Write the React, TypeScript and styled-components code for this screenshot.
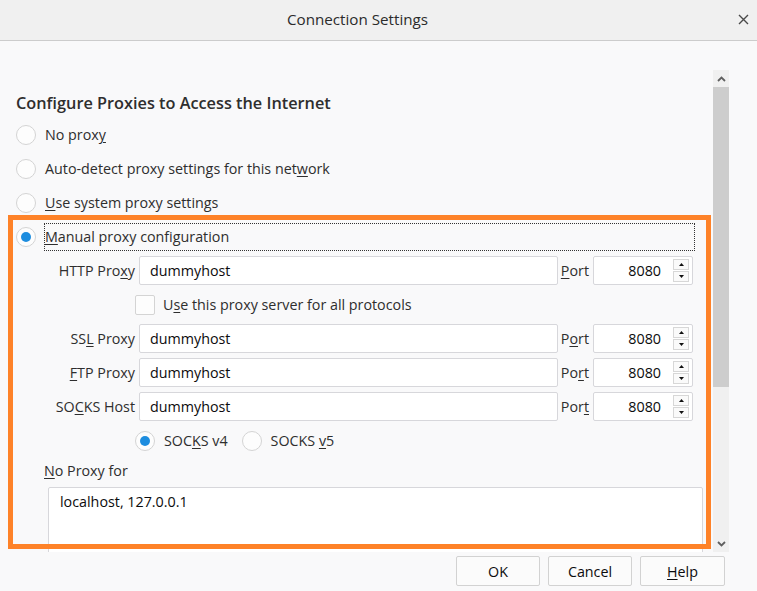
import styled, { createGlobalStyle } from 'styled-components'

const GlobalStyle = createGlobalStyle`
  html, body {
    margin: 0;
    padding: 0;
    background: #f9f9fa;
  }
  body {
    font-family: 'Open Sans', 'Noto Sans', sans-serif;
    color: #2e2e2e;
  }
`

const proxies = [
  { label: <>HTTP Pro<u>x</u>y</>, port: <><u>P</u>ort</> },
  { label: <>SS<u>L</u> Proxy</>, port: <>P<u>o</u>rt</> },
  { label: <><u>F</u>TP Proxy</>, port: <>Po<u>r</u>t</> },
  { label: <>SO<u>C</u>KS Host</>, port: <>Por<u>t</u></> },
]

const ProxyRow = ({ label, port }: { label: React.ReactNode; port: React.ReactNode }) => (
  <>
    <FieldLabel>{label}</FieldLabel>
    <TextInput defaultValue="dummyhost" />
    <FieldLabel>{port}</FieldLabel>
    <PortBox>
      <PortValue>8080</PortValue>
      <Spinner>
        <SpinButton>
          <svg width="5" height="3" viewBox="0 0 5 3">
            <path d="M2.5 0 L5 3 L0 3 Z" fill="#111" />
          </svg>
        </SpinButton>
        <SpinButton>
          <svg width="5" height="3" viewBox="0 0 5 3">
            <path d="M0 0 L5 0 L2.5 3 Z" fill="#111" />
          </svg>
        </SpinButton>
      </Spinner>
    </PortBox>
  </>
)

const Chevron = ({ up }: { up?: boolean }) => (
  <svg width="9" height="6" viewBox="0 0 9 6">
    <polyline
      points={up ? '1,5 4.5,1.5 8,5' : '1,1 4.5,4.5 8,1'}
      fill="none"
      stroke="#5f5f5f"
      strokeWidth="1.8"
    />
  </svg>
)

export default function App() {
  return (
    <>
      <GlobalStyle />
      <Dialog>
        <TitleBar>
          <Title>Connection Settings</Title>
          <CloseButton>
            <svg width="11" height="11" viewBox="0 0 11 11">
              <path d="M1 1 L10 10 M10 1 L1 10" stroke="#4a4a4a" strokeWidth="1.4" />
            </svg>
          </CloseButton>
        </TitleBar>

        <ScrollArea>
          <Content>
            <Heading>Configure Proxies to Access the Internet</Heading>
            <RadioRow>
              <Radio />
              <OptionText>No prox<u>y</u></OptionText>
            </RadioRow>
            <RadioRow>
              <Radio />
              <OptionText>Auto-detect proxy settings for this net<u>w</u>ork</OptionText>
            </RadioRow>
            <RadioRow>
              <Radio />
              <OptionText><u>U</u>se system proxy settings</OptionText>
            </RadioRow>
            <RadioRow>
              <Radio $checked />
              <FocusText><u>M</u>anual proxy configuration</FocusText>
            </RadioRow>

            <ProxyGrid>
              <ProxyRow {...proxies[0]} />
              <SubOptions>
                <Checkbox />
                <OptionText>U<u>s</u>e this proxy server for all protocols</OptionText>
              </SubOptions>
              {proxies.slice(1).map((p, i) => (
                <ProxyRow key={i} {...p} />
              ))}
              <SubOptions>
                <Radio $checked />
                <SocksText>SOC<u>K</u>S v4</SocksText>
                <Radio />
                <SocksText>SOCKS <u>v</u>5</SocksText>
              </SubOptions>
            </ProxyGrid>

            <NoProxyLabel><u>N</u>o Proxy for</NoProxyLabel>
            <NoProxyArea defaultValue="localhost, 127.0.0.1" />
          </Content>

          <Scrollbar>
            <ScrollButton>
              <Chevron up />
            </ScrollButton>
            <ScrollThumb />
            <ScrollTrack />
            <ScrollButton>
              <Chevron />
            </ScrollButton>
          </Scrollbar>
        </ScrollArea>

        <Footer>
          <DialogButton>OK</DialogButton>
          <DialogButton>Cancel</DialogButton>
          <DialogButton $wide><u>H</u>elp</DialogButton>
        </Footer>

        <Highlight />
      </Dialog>
    </>
  )
}

const Dialog = styled.div`
  position: relative;
  width: 757px;
  height: 591px;
  display: flex;
  flex-direction: column;
  background: #f9f9fa;
  overflow: hidden;
  font-size: 14.3px;

  u {
    text-decoration: underline;
    text-underline-offset: 2px;
  }
`

const TitleBar = styled.div`
  height: 41px;
  flex: none;
  box-sizing: border-box;
  display: flex;
  align-items: center;
  justify-content: center;
  padding: 0 42px 2px 0;
  background: #f0f0f0;
  border-bottom: 1px solid #cccccc;
  position: relative;
`

const Title = styled.div`
  font-size: 15.2px;
  color: #2b2b2b;
`

const CloseButton = styled.div`
  position: absolute;
  right: 8px;
  top: 14px;
  width: 11px;
  height: 11px;
  display: flex;
`

const ScrollArea = styled.div`
  margin-top: 29px;
  width: 729px;
  height: 482px;
  flex: none;
  display: flex;
`

const Content = styled.div`
  flex: 1;
  overflow: hidden;
  padding: 21px 0 0 16px;
  display: flex;
  flex-direction: column;
  align-items: flex-start;

  & > * {
    flex: none;
  }
`

const Heading = styled.div`
  font-size: 16.3px;
  font-weight: 600;
  line-height: 24px;
  height: 27px;
  color: #2e2e2e;
`

const RadioRow = styled.div`
  height: 34px;
  display: flex;
  align-items: center;
  gap: 9px;
  align-self: stretch;
`

const Radio = styled.span<{ $checked?: boolean }>`
  flex: none;
  width: 20px;
  height: 20px;
  box-sizing: border-box;
  border-radius: 50%;
  border: 1px solid #d4d4d4;
  background: #fdfdfd;
  display: flex;
  align-items: center;
  justify-content: center;

  &::after {
    content: '';
    width: 10px;
    height: 10px;
    border-radius: 50%;
    background: ${({ $checked }) => ($checked ? '#1d8ddf' : 'transparent')};
  }
`

const OptionText = styled.span`
  line-height: 20px;
  color: #2e2e2e;
  white-space: nowrap;
`

const FocusText = styled(OptionText)`
  flex: 1;
  margin-right: 18px;
  margin-left: -1px;
  line-height: 26px;
  border: 1px dotted #333;
`

const ProxyGrid = styled.div`
  margin: 2px 0 0 28px;
  display: grid;
  grid-template-columns: 91px 419px 27px 100px;
  grid-auto-rows: 29px;
  column-gap: 4px;
  row-gap: 5px;
  align-items: center;
`

const FieldLabel = styled.span`
  justify-self: end;
  white-space: nowrap;
  color: #2e2e2e;
`

const TextInput = styled.input`
  height: 29px;
  box-sizing: border-box;
  border: 1px solid #d7d7db;
  border-radius: 2px;
  background: #fff;
  padding: 0 10px;
  font: inherit;
  color: #0c0c0d;
  outline: none;
`

const PortBox = styled.div`
  height: 29px;
  box-sizing: border-box;
  border: 1px solid #d7d7db;
  border-radius: 2px;
  background: #fff;
  display: flex;
  align-items: center;
  justify-content: flex-end;
  padding-right: 3px;
  gap: 12px;
`

const PortValue = styled.span`
  color: #0c0c0d;
`

const Spinner = styled.div`
  display: flex;
  flex-direction: column;
  width: 16px;
`

const SpinButton = styled.div`
  height: 11px;
  box-sizing: border-box;
  border: 1px solid #d7d7d7;
  background: #fafafa;
  display: flex;
  align-items: center;
  justify-content: center;

  & + & {
    margin-top: 1px;
  }
`

const SubOptions = styled.div`
  grid-column: 1 / -1;
  height: 30px;
  padding-left: 91px;
  display: flex;
  align-items: center;
`

const Checkbox = styled.span`
  width: 20px;
  height: 20px;
  box-sizing: border-box;
  border: 1px solid #d4d4d4;
  border-radius: 2px;
  background: #fdfdfd;
  margin-right: 8px;
`

const SocksText = styled(OptionText)`
  margin: 0 14px 0 9px;
`

const NoProxyLabel = styled.div`
  margin: 6px 0 0 28px;
  line-height: 20px;
  color: #2e2e2e;
`

const NoProxyArea = styled.textarea`
  margin: 6px 0 0 32px;
  width: 655px;
  height: 100px;
  box-sizing: border-box;
  border: 1px solid #d7d7db;
  border-radius: 2px;
  background: #fff;
  padding: 4px 11px;
  font: inherit;
  color: #0c0c0d;
  resize: none;
  outline: none;
`

const Scrollbar = styled.div`
  width: 16px;
  flex: none;
  display: flex;
  flex-direction: column;
  background: #f0f0f0;
`

const ScrollButton = styled.div`
  height: 17px;
  flex: none;
  display: flex;
  align-items: center;
  justify-content: center;
`

const ScrollThumb = styled.div`
  height: 300px;
  flex: none;
  background: #cdcdcd;
`

const ScrollTrack = styled.div`
  flex: 1;
`

const Footer = styled.div`
  display: flex;
  justify-content: flex-end;
  gap: 8px;
  padding: 4px 32px 0 0;
`

const DialogButton = styled.button<{ $wide?: boolean }>`
  width: ${({ $wide }) => ($wide ? '85px' : '84px')};
  height: 30px;
  box-sizing: border-box;
  border: 1px solid #d2d2d2;
  border-radius: 2px;
  background: #fbfbfb;
  font: inherit;
  color: #0c0c0d;
  padding: 0;
`

const Highlight = styled.div`
  position: absolute;
  left: 8px;
  top: 215px;
  width: 703px;
  height: 334px;
  box-sizing: border-box;
  border: 5px solid #fe8228;
  pointer-events: none;
`
